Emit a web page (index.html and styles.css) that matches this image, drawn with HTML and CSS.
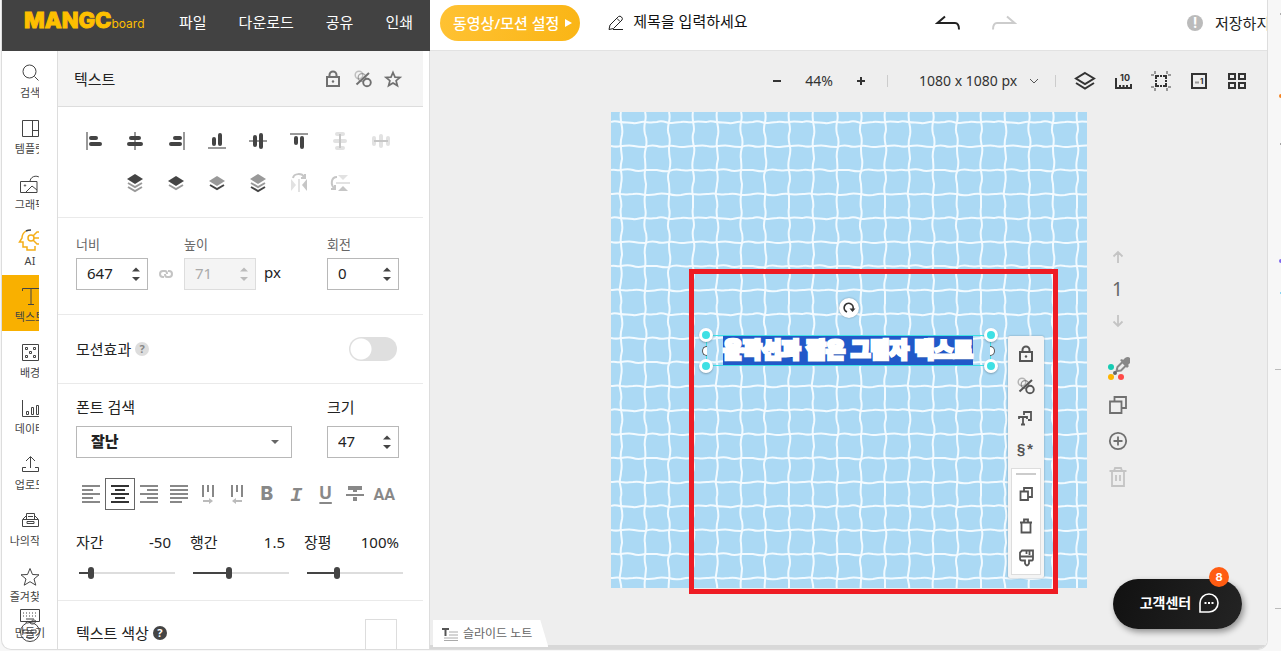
FILE: index.html
```html
<!DOCTYPE html>
<html lang="ko">
<head>
<meta charset="utf-8">
<title>망고보드</title>
<link rel="stylesheet" href="styles.css">
</head>
<body>
<svg class="defs" aria-hidden="true">
  <symbol id="lock" viewBox="0 0 20 20"><path d="M4 8h12v9H4zM6.500 8V6a3.500 3.500 0 0 1 7 0v2" fill="none" stroke="currentColor" stroke-width="2"/><circle cx="10" cy="12.500" r="1.200" fill="currentColor"/></symbol>
  <symbol id="opacity" viewBox="0 0 20 20"><g fill="none" stroke="currentColor"><circle cx="6" cy="6" r="3.800" stroke-width="1.500" opacity=".4"/><circle cx="9" cy="8.500" r="3.800" stroke-width="1.300" opacity=".6"/><circle cx="14" cy="13.500" r="3.800" stroke-width="1.900"/><path d="M3.500 15.500 16 4" stroke-width="2"/></g></symbol>
  <symbol id="copy" viewBox="0 0 20 20"><path d="M4.500 7.500h7.500v8.500H4.500zM8 7V4h8v9h-3.500" fill="none" stroke="currentColor" stroke-width="1.800"/></symbol>
  <symbol id="arrows" viewBox="0 0 10 16"><path d="M1 5.500 5 1.500 9 5.500zM1 11h8l-4 4z" fill="currentColor"/></symbol>
  <symbol id="star" viewBox="0 0 20 20"><path d="M10 1.500l2.500 6 6.500.3-5 4.200 1.800 6.200L10 14.700l-5.800 3.500L6 12 1 7.800l6.500-.3z" fill="none" stroke="currentColor"/></symbol>
  <symbol id="star-bold" viewBox="0 0 20 20"><path d="M10 3.500l2 4.700 5 .3-3.900 3.200 1.300 4.900L10 14l-4.400 2.600 1.300-4.900L3 8.500l5-.3z" fill="none" stroke="currentColor" stroke-width="1.700"/></symbol>
</svg>
<div class="app">
  <div class="left">
    <header class="menu">
      <a class="logo" href="#" aria-label="망고보드"><span class="logo-main">MANGC</span><span class="logo-sub">board</span></a>
      <nav><a href="#">파일</a><a href="#">다운로드</a><a href="#">공유</a><a href="#">인쇄</a></nav>
    </header>
    <div class="work">
      <nav class="rail">
        <div class="rail-clip">
          <a href="#"><svg viewBox="0 0 20 20"><circle cx="9.500" cy="8.500" r="6.500"/><path d="M14.500 13.500l4 4"/></svg>검색</a>
          <a href="#"><svg viewBox="0 0 20 20"><path d="M2.500 1.500h16v16h-16zM12.500 1.500v16M12.500 11.500h6"/></svg>템플릿</a>
          <a href="#"><svg viewBox="0 0 20 20"><path d="M.5 6.500h16.500v11H.5zM6 17l6-6 5 4M10 6c1-6 9-6 11-2"/><circle cx="5" cy="10.500" r=".7"/></svg>그래픽</a>
          <a href="#" class="ai"><svg viewBox="0 0 20 20"><path d="M6 0C3 2 2 5 2 7l-2.500 4H3v5h4v3h8v-4"/><path d="M6 0c2-1 4-1 5-1" stroke="#444"/><circle cx="11" cy="7" r="3"/><path d="M14 7h6M13 5l4-4h3M13 9l4 4h3"/></svg>AI</a>
          <a href="#" class="on"><svg viewBox="0 0 20 20"><path d="M2.500 4V1.500h17V4M11 1.500v16M8 17.500h6"/></svg>텍스트</a>
          <a href="#"><svg viewBox="0 0 20 20"><path d="M2.500 1.500h16v16h-16zM5.500 4.500h2v2h-2zM13.500 4.500h2v2h-2zM9.500 8.500h2v2h-2zM5.500 12.500h2v2h-2zM13.500 12.500h2v2h-2z"/></svg>배경</a>
          <a href="#"><svg viewBox="0 0 20 20"><path d="M2.500 1v16.500H20M6.500 12.500h2v3h-2zM11.500 8.500h2v7h-2zM16.500 6.500h2v9h-2z"/></svg>데이터</a>
          <a href="#"><svg viewBox="0 0 20 20"><path d="M10.500 13V2M6 6l4.500-4.500L15 6M6 12.500H2.500v4h16v-4H15"/></svg>업로드</a>
          <a href="#"><svg viewBox="0 0 20 20"><path d="M2.500 8.500h16v7h-16zM3 8l3-3M18 8l-3-3M6.500 8V2.500h8V8M8 5.500h5M7 10.500h7v2H7z"/></svg>나의작업</a>
          <a href="#"><svg viewBox="0 0 20 20"><use href="#star"/></svg>즐겨찾기</a>
        </div>
        <a class="rail-last" href="#"><svg viewBox="0 0 20 14"><path d="M.5.500h19v12H.5zM3 4h1m2 0h1m2 0h1m2 0h1m2 0h1M3 7h1m2 0h1m2 0h1m2 0h1m2 0h1M6 10h8"/></svg><span>만들기</span>
          <svg class="face" viewBox="0 0 24 24"><circle cx="12" cy="13" r="9.500"/><path d="M8 4c1-3 4-1 4 0 2-4 5-3 6-2-1 3-4 4-6 2M5 11h5v3H5zM13 11h5v3h-5zM8 18c3 2 5 2 8 0"/></svg></a>
      </nav>
      <section class="panel">
        <div class="panel-head"><h1>텍스트</h1>
          <button aria-label="잠금"><svg viewBox="0 0 20 20"><use href="#lock"/></svg></button>
          <button aria-label="투명도"><svg viewBox="0 0 20 20"><use href="#opacity"/></svg></button>
          <button aria-label="즐겨찾기"><svg viewBox="0 0 20 20"><use href="#star-bold"/></svg></button>
        </div>
        <div class="arrange">
          <button aria-label="왼쪽 맞춤"><svg viewBox="0 0 20 20"><path class="g" d="M3 1v18"/><path class="k" d="M7 7h5M7 13h9"/></svg></button>
          <button aria-label="가운데 맞춤"><svg viewBox="0 0 20 20"><path class="g" d="M10 1v18"/><path class="k" d="M6 7h8M4 13h12"/></svg></button>
          <button aria-label="오른쪽 맞춤"><svg viewBox="0 0 20 20"><path class="g" d="M18 1v18"/><path class="k" d="M9 7h5M5 13h9"/></svg></button>
          <button aria-label="아래 맞춤"><svg viewBox="0 0 20 20"><path class="g" d="M1 17h18"/><path class="k" d="M7 8v5M13 4v9"/></svg></button>
          <button aria-label="중간 맞춤"><svg viewBox="0 0 20 20"><path class="g" d="M1 10h18"/><path class="k" d="M7 6v8M13 4v12"/></svg></button>
          <button aria-label="위 맞춤"><svg viewBox="0 0 20 20"><path class="g" d="M1 3h18"/><path class="k" d="M7 7v5M13 7v9"/></svg></button>
          <button aria-label="세로 간격" disabled><svg viewBox="0 0 20 20"><path class="k" d="M7 3h6M5 10h10M7 17h6"/><path class="g" d="M10 3v14"/></svg></button>
          <button aria-label="가로 간격" disabled><svg viewBox="0 0 20 20"><path class="k" d="M3 7v6M10 5v10M17 7v6"/><path class="g" d="M3 10h14"/></svg></button>
          <button class="second" aria-label="맨 앞으로"><svg viewBox="0 0 20 20"><path class="fk" d="M10 1l8 5-8 5-8-5z"/><path class="l" d="M3 10l7 4 7-4M3 14l7 4 7-4"/></svg></button>
          <button aria-label="앞으로"><svg viewBox="0 0 20 20"><path class="fk" d="M10 3l8 5-8 5-8-5z"/><path class="l" d="M3 12l7 4 7-4"/></svg></button>
          <button aria-label="뒤로"><svg viewBox="0 0 20 20"><path class="fg" d="M10 3l8 5-8 5-8-5z"/><path class="l d" d="M3 12l7 4 7-4"/></svg></button>
          <button aria-label="맨 뒤로"><svg viewBox="0 0 20 20"><path class="fg" d="M10 1l8 5-8 5-8-5z"/><path class="l" d="M3 10l7 4 7-4"/><path class="l d" d="M3 14l7 4 7-4"/></svg></button>
          <button aria-label="좌우 반전" disabled><svg viewBox="0 0 20 20"><path class="fk" d="M2 6v12l5-6z"/><path class="fg" d="M18 6v12l-5-6z"/><path class="k thin" d="M10 6v13"/><path class="g thin" d="M4 5c1-5 9-5 11-1l1 1M12 5h4V1"/></svg></button>
          <button aria-label="상하 반전" disabled><svg viewBox="0 0 20 20"><path class="fk" d="M8 2h10l-5 5z"/><path class="fg" d="M8 18h10l-5-5z"/><path class="k thin" d="M6 10h14"/><path class="g thin" d="M7 4C1 4 0 12 5 16M1 16h4v-4"/></svg></button>
        </div>
        <div class="size">
          <div class="field"><label class="small" for="w">너비</label><div class="spin"><input id="w" value="647"><svg><use href="#arrows"/></svg></div></div>
          <svg class="chain" viewBox="0 0 16 10"><path d="M6 8H5a3 3 0 0 1 0-6h2q2 0 2 3M10 2h1a3 3 0 0 1 0 6H9q-2 0-2-3" fill="none" stroke="currentColor" stroke-width="2"/></svg>
          <div class="field"><label class="small" for="h">높이</label><div class="spin off"><input id="h" value="71" disabled><svg><use href="#arrows"/></svg></div></div>
          <span class="px">px</span>
          <div class="field last"><label class="small" for="r">회전</label><div class="spin"><input id="r" value="0"><svg><use href="#arrows"/></svg></div></div>
        </div>
        <div class="motion"><label for="motion">모션효과</label><span class="help">?</span><input id="motion" class="toggle" type="checkbox"></div>
        <div class="type">
          <div class="font-row">
            <div class="field"><label for="font">폰트 검색</label><div class="pick"><select id="font"><option>잘난</option></select><svg viewBox="0 0 10 6"><path d="M1 1h8L5 5z" fill="#666"/></svg></div></div>
            <div class="field last"><label for="fs">크기</label><div class="spin"><input id="fs" value="47"><svg><use href="#arrows"/></svg></div></div>
          </div>
          <div class="format">
            <button aria-label="왼쪽 정렬"><svg viewBox="0 0 20 20"><path d="M1 2h18M1 6h11M1 10h18M1 14h11M1 18h18"/></svg></button>
            <button class="on" aria-label="가운데 정렬"><svg viewBox="0 0 20 20"><path d="M1 2h18M5 6h10M1 10h18M5 14h10M1 18h18"/></svg></button>
            <button aria-label="오른쪽 정렬"><svg viewBox="0 0 20 20"><path d="M1 2h18M8 6h11M1 10h18M8 14h11M1 18h18"/></svg></button>
            <button aria-label="양쪽 정렬"><svg viewBox="0 0 20 20"><path d="M1 2h18M1 6h18M1 10h18M1 14h18M1 18h12"/></svg></button>
            <button aria-label="세로쓰기 오른쪽"><svg viewBox="0 0 20 20"><path d="M5 1v12M10 1v7M15 1v12"/><path class="pale" d="M5 17h7"/><path class="tip" d="M11 14l4 3-4 3z"/></svg></button>
            <button aria-label="세로쓰기 왼쪽"><svg viewBox="0 0 20 20"><path d="M5 1v12M10 1v7M15 1v12"/><path class="pale" d="M15 17H8"/><path class="tip" d="M9 14l-4 3 4 3z"/></svg></button>
            <button class="b">B</button><button class="i">I</button><button class="u">U</button>
            <button aria-label="취소선"><svg viewBox="0 0 20 20"><path class="thick" d="M3 4h14M10 4v4M10 13v4"/><path d="M1 11h18"/></svg></button>
            <button class="aa">AA</button>
          </div>
          <div class="sliders">
            <div><label for="s1">자간</label><output>-50</output><input id="s1" type="range" value="10" style="--fill:12%"></div>
            <div><label for="s2">행간</label><output>1.5</output><input id="s2" type="range" value="37" style="--fill:37%"></div>
            <div><label for="s3">장평</label><output>100%</output><input id="s3" type="range" value="30" style="--fill:31%"></div>
          </div>
        </div>
        <div class="colour"><span>텍스트 색상</span><span class="help dark">?</span><button class="swatch" aria-label="텍스트 색상"></button></div>
      </section>
    </div>
  </div>
  <main class="right">
    <header class="top">
      <button class="motion-btn">동영상/모션 설정 <svg viewBox="0 0 8 8"><path d="M1 0v8l7-4z" fill="#fff"/></svg></button>
      <svg class="pencil" viewBox="0 0 16 16"><path d="M5 14.500h10M1 14.500l1-4.500 8.500-8.500q1.500-1 3 .5t.5 3L5.500 13.500zM9 3.500l3 3" fill="none" stroke="#222"/></svg>
      <span class="doc">제목을 입력하세요</span>
      <button class="undo" aria-label="실행 취소"><svg viewBox="0 0 26 16"><path d="M10 1.500 2.500 8H20q4 0 4 6.500" fill="none" stroke="#222" stroke-width="2"/></svg></button>
      <button class="redo" aria-label="다시 실행"><svg viewBox="0 0 26 16"><path d="M16 1.500 23.500 8H6q-4 0-4 6.500" fill="none" stroke="#ccc" stroke-width="2"/></svg></button>
      <div class="save"><span class="warn">!</span>저장하지 않음</div>
    </header>
    <div class="tools">
      <button class="zoom" aria-label="축소"><svg viewBox="0 0 10 10"><path d="M1 5h8" stroke="#333" stroke-width="2"/></svg></button>
      <span class="percent">44%</span>
      <button class="zoom" aria-label="확대"><svg viewBox="0 0 10 10"><path d="M1 5h8M5 1v8" stroke="#333" stroke-width="2"/></svg></button>
      <i></i>
      <button class="dims"><span>1080 x 1080 px</span><svg viewBox="0 0 10 6"><path d="M1 1l4 4 4-4" fill="none" stroke="#555"/></svg></button>
      <i></i>
      <div class="view">
        <button aria-label="레이어"><svg viewBox="0 0 22 22"><path d="M11 3l9 5.500-9 5.500-9-5.500zM2 13l9 5.500 9-5.500"/></svg></button>
        <button aria-label="눈금자"><svg viewBox="0 0 22 22"><path d="M4 8v10h15v-4M8 18v-3M11.500 18v-3M15 18v-3"/><text x="8" y="11">10</text></svg></button>
        <button aria-label="안내선"><svg viewBox="0 0 22 22"><path d="M6 9V6h3M13 6h3v3M16 13v3h-3M9 16H6v-3M10 6h2M10 16h2M6 10v2M16 10v2"/><path class="mid" d="M5 1v3M1 5h3M17 1v3M18 5h3M5 18v3M1 17h3M17 18v3M18 17h3"/></svg></button>
        <button aria-label="페이지 번호"><svg viewBox="0 0 22 22"><path d="M4 4h14v14H4z"/><text class="num" x="12" y="14">1</text><path class="mid" d="M7 12.500h4"/></svg></button>
        <button aria-label="전체 보기"><svg viewBox="0 0 22 22"><path d="M3 4h6v5H3zM13 4h6v5h-6zM3 13h6v5H3zM13 13h6v5h-6z"/></svg></button>
      </div>
    </div>
    <div class="stage">
      <div class="page">
        <svg class="pool" aria-hidden="true"><defs><pattern id="tiles" width="96" height="96" patternUnits="userSpaceOnUse"><g fill="none" stroke="#f2faff" stroke-width="2">
          <path d="M10 0c-1 3 0 6 0 10c1 4 2 8 1 13c-1 4-2 8-1 12c0 5 1 8 1 12c-1 4-2 8-1 12c1 5 1 9 0 13c0 5-2 8-1 12c1 4 2 8 1 12M34 0c1 3 1 6 0 10c-1 5-1 8 0 12c2 5 2 8 1 13c-1 4-2 8-1 12c0 4 1 8 0 12c-1 5 0 8 1 13c0 4-1 8-1 12c-1 4 0 8 0 12M58 0c1 4 1 6 0 10c-1 4-2 9 0 13c1 4 1 8 0 12c0 5 0 8 1 12c1 5 0 8-1 13c-2 4-1 8 0 12c0 4 1 8 0 12c0 4-1 8 0 12M82 0c-1 4 0 6 0 10c1 5 2 8 0 12c-1 5 0 8 1 13c1 4 0 8-1 12c-1 5-1 8 0 12c1 5 2 9 0 13c-1 4-1 8 0 12c0 4 0 8 0 12"/>
          <path d="M0 10c4-2 6 0 10 0c4 1 8 0 12 1c4 1 8-2 12-1c5 1 8 0 12 0c5-2 8 0 12 1c5 0 8-1 12-1c4-1 8 1 12 0c5-1 10 0 14 0M0 34c4 1 6 1 10 0c4 0 8-1 13 0c4 1 7 1 11 1c5-2 8-2 12-1c5 2 8 0 12 0c4-1 8 1 12 1c5 0 8-1 12-1c5 0 10-1 14 0M0 58c4-1 6 1 10 0c4-1 9-1 12 0c5 2 8 1 12 0c4 0 8 0 12 0c5 1 8 2 12 1c5-2 8-2 12-1c5 1 8 0 12 0c5 0 10 1 14 0M0 82c4 0 6-1 10 0c5 1 8 0 12 0c5-1 8 0 12 1c4 0 8 0 12-1c5-1 8 0 12 0c5 2 8 1 12 1c4-1 8-2 12-1c5 1 10 0 14 0"/></g></pattern></defs><rect width="100%" height="100%" fill="#abd9f4"/><rect width="100%" height="100%" fill="url(#tiles)"/></svg>
        <div class="frame"></div>
        <div class="box"><span class="art">윤곽선과 짧은 그림자 텍스트</span><b class="side ml"></b><b class="side mr"></b><b class="dot tl"></b><b class="dot tr"></b><b class="dot bl"></b><b class="dot br"></b></div>
        <button class="rotate" aria-label="회전"><svg viewBox="0 0 14 14"><path d="M5 11A4.500 4.500 0 1 1 11 8" fill="none" stroke="#333" stroke-width="1.700"/><path d="M7.500 7.500h6L10.500 11z" fill="#333"/></svg></button>
        <div class="float">
          <button aria-label="잠금"><svg viewBox="0 0 20 20"><use href="#lock"/></svg></button>
          <button aria-label="투명도"><svg viewBox="0 0 20 20"><use href="#opacity"/></svg></button>
          <button aria-label="텍스트 변환"><svg viewBox="0 0 20 20"><path d="M3 11V9h8v2M7 9v7M5 16.500h4M8 7V4h7v8h-3" fill="none" stroke="currentColor" stroke-width="1.800"/></svg></button>
          <button class="special">§*</button>
          <div class="sub"><hr>
            <button aria-label="복제"><svg viewBox="0 0 20 20"><use href="#copy"/></svg></button>
            <button aria-label="삭제"><svg viewBox="0 0 20 20"><path d="M4 6.500h12M5.500 6.500v10h9v-10M8 6V3.500h4V6" fill="none" stroke="currentColor" stroke-width="1.800"/></svg></button>
            <button aria-label="서식 복사"><svg viewBox="0 0 20 20"><path d="M6 2.500h11v8q0 2-1 2h-3v3q-2 4-4 0v-3H6q-2 0-2-2V4.500zM4 8.500h13M10.500 3v3M13.500 3v4" fill="none" stroke="currentColor" stroke-width="1.800"/></svg></button>
          </div>
        </div>
      </div>
      <div class="page-tools">
        <button class="light" aria-label="이전"><svg viewBox="0 0 20 20"><path d="M10 16V5M5.500 9.500 10 5l4.500 4.500"/></svg></button>
        <span>1</span>
        <button class="light" aria-label="다음"><svg viewBox="0 0 20 20"><path d="M10 4v11M5.500 10.500 10 15l4.500-4.500"/></svg></button>
        <button class="pipette" aria-label="색상 추출"><svg viewBox="0 0 24 24"><path d="M10.500 15l1-4 5-5 3.500 3.500-5 5z" stroke-width="2"/><path d="M14 4l2-1 1 1 2-2q3-2 5 0t0 5l-2 2 1 1-2 2z" fill="#888" stroke="none"/><circle class="f" cx="9" cy="17" r="2" fill="#666"/><circle class="f" cx="5" cy="11" r="3" fill="#16cbb3"/><circle class="f" cx="5" cy="21" r="3" fill="#ffb400"/><circle class="f" cx="15" cy="21" r="3" fill="#ff4a48"/></svg></button>
        <button aria-label="페이지 복제"><svg viewBox="0 0 20 20"><path d="M2 6.500h11.500V18H2zM6.500 6V2H18v11h-4"/></svg></button>
        <button aria-label="페이지 추가"><svg viewBox="0 0 20 20"><circle cx="10" cy="10" r="8.200"/><path d="M10 5.500v9M5.500 10h9"/></svg></button>
        <button class="light" aria-label="페이지 삭제"><svg viewBox="0 0 20 20"><path d="M1.500 4h17M4 4v15h12V4M6 4l1-3h6l1 3M8 8v6M12 8v6"/></svg></button>
      </div>
    </div>
    <footer><button class="note"><svg viewBox="0 0 18 14"><path d="M1 2h7M4.500 2v7" stroke="#555" stroke-width="2"/><path d="M8 5h9M8 8h9M3 11h14M3 13.500h14" stroke="#aaa"/></svg>슬라이드 노트</button></footer>
    <button class="chat">고객센터<svg viewBox="0 0 22 22"><path d="M2 20V11a9 9 0 1 1 9 9z" fill="none" stroke="#fff" stroke-width="1.600"/><path d="M6.500 11h2M10 11h2M13.500 11h2" stroke="#fff" stroke-width="2"/></svg><span class="badge">8</span></button>
  </main>
</div>
<svg class="edge" aria-hidden="true"><path d="M7 369.500h7M7 608.500h7" stroke="#bbb"/><circle cx="13" cy="14" r="1" fill="#999"/><circle cx="13" cy="96" r="2" fill="#f58220"/><path d="M12 144h2" stroke="#555"/><circle cx="13" cy="261" r="2" fill="#8068ee"/><circle cx="13" cy="293" r="1" fill="#67c8ef"/></svg>
</body>
</html>
```
FILE: styles.css
```css
* { box-sizing: border-box; }
body { margin: 0; height: 100vh; overflow: hidden; display: flex; background: #f7f7f7; color: #222; font: 15px/20px "Noto Sans", "Noto Sans CJK KR", sans-serif; }
button, input, select { font: inherit; color: inherit; margin: 0; }
button { border: 0; padding: 0; background: none; display: flex; align-items: center; justify-content: center; }
a { color: inherit; text-decoration: none; }
svg { display: block; flex: none; }
.defs { position: absolute; width: 0; height: 0; }
.app { flex: 1; min-width: 0; height: calc(100vh - 1px); margin-left: 1px; border: 1px solid #ddd; border-top: 0; border-radius: 0 0 10px 10px; overflow: hidden; display: grid; grid-template-columns: 428px minmax(0, 1fr); background: #fff; }
.edge { width: 13px; height: 100%; }

/* left side */
.left { display: flex; flex-direction: column; min-height: 0; border-right: 1px solid #ddd; }
.menu { flex: none; height: 51px; margin-right: -1px; background: #424242; color: #fff; display: flex; align-items: center; padding: 0 17px 8px 22px; }
.logo { display: flex; align-items: baseline; color: #fdbf00; }
.logo-main { font: 800 22px/26px Inter, sans-serif; -webkit-text-stroke: 1px #fdbf00; }
.logo-sub { font: 400 12px/26px Inter, sans-serif; }
.menu nav { display: flex; gap: 32px; margin-left: auto; white-space: nowrap; }
.work { flex: 1; min-height: 0; display: flex; }
.rail { position: relative; flex: none; width: 56px; border-right: 1px solid #ddd; font-size: 11px; color: #444; }
.rail-clip { width: 37px; overflow: hidden; }
.rail-clip a { width: 56px; height: 56px; padding-top: 12px; display: flex; flex-direction: column; align-items: center; white-space: nowrap; }
.rail svg { width: 20px; height: 20px; fill: none; stroke: #444; overflow: visible; }
.rail .on { background: #f9b000; }
.rail .ai svg { stroke: #f5ae19; stroke-width: 1.5; }
.rail-last { position: absolute; left: 0; bottom: 6px; width: 56px; display: flex; flex-direction: column; align-items: center; }
.rail-last svg { height: 14px; }
.rail-last .face { position: absolute; bottom: 0; left: 16px; width: 24px; height: 24px; }
.panel { flex: none; width: 365px; min-height: 0; overflow: hidden; }
.panel-head { height: 56px; padding: 0 15px 0 16px; display: flex; align-items: center; background: #f4f4f4; border-bottom: 1px solid #ddd; }
h1 { margin: 0 auto 0 0; font-size: 15px; font-weight: 400; }
.panel-head button { width: 30px; height: 30px; color: #707070; }
.panel-head svg { width: 20px; height: 20px; }
.arrange, .size, .motion, .type { border-bottom: 1px solid #eaeaea; }
.arrange { padding: 13px 22px 13px 15px; display: grid; grid-template-columns: repeat(8, 1fr); grid-auto-rows: 42px; }
.arrange svg { width: 20px; height: 20px; fill: none; }
.arrange .second { grid-column: 2; }
.g { stroke: #999; stroke-width: 2; }
.k { stroke: #444; stroke-width: 4; stroke-linecap: round; }
.fk { fill: #444; }
.fg { fill: #999; }
.l { stroke: #999; stroke-width: 2; }
.l.d { stroke: #444; }
:disabled .g { stroke: #c6c6c6; }
:disabled .k { stroke: #e2e2e2; }
.arrange .thin { stroke-width: 2; stroke-linecap: butt; }
:disabled .fk { fill: #e2e2e2; }
:disabled .fg { fill: #c6c6c6; }
.size { display: flex; align-items: flex-end; padding: 16px 24px 24px 18px; }
.field label { display: block; height: 30px; line-height: 22px; }
.field label.small { height: 24px; line-height: 20px; font-size: 13px; color: #666; }
.spin { position: relative; width: 72px; height: 32px; }
.spin input { width: 100%; height: 100%; border: 1px solid #b8b8b8; border-radius: 0; padding: 0 26px 3px 10px; background: #fff; }
.spin svg { position: absolute; right: 7px; top: 8px; width: 10px; height: 16px; color: #444; }
.spin.off input { background: #f4f4f4; border-color: #ddd; color: #aaa; }
.spin.off svg { color: #bbb; }
.chain { width: 16px; height: 10px; margin: 0 10px 11px; color: #c4c4c4; }
.px { margin: 0 0 8px 8px; }
.last { margin-left: auto; }
.motion { height: 69px; padding: 0 26px 0 18px; display: flex; align-items: center; gap: 4px; }
.help { width: 14px; height: 14px; border-radius: 50%; background: #ddd; color: #888; font: 700 11px/14px "Noto Sans", sans-serif; text-align: center; }
.help.dark { background: #444; color: #fff; }
.toggle { appearance: none; margin-left: auto; width: 48px; height: 24px; border-radius: 12px; background: radial-gradient(circle at 12px 12px, #fff 10px, #dfdfdf 11px); }
.type { padding: 12px 24px 17px 18px; }
.font-row { display: flex; }
.pick { position: relative; width: 216px; height: 32px; }
.pick select { appearance: none; width: 100%; height: 100%; border: 1px solid #b8b8b8; border-radius: 0; padding: 0 14px 2px; background: #fff; font-weight: 900; }
.pick svg { position: absolute; right: 12px; top: 13px; width: 10px; height: 6px; }
.format { margin-top: 20px; display: grid; grid-template-columns: repeat(11, 1fr); color: #888; }
.format button { height: 32px; }
.format svg { width: 20px; height: 20px; fill: none; stroke: #888; stroke-width: 2; }
.format .on { border: 1px solid #666; }
.format .on svg { stroke: #333; }
.format .pale { stroke: #bbb; }
.format .tip { fill: #bbb; stroke: none; }
.format .thick { stroke-width: 4; }
.format .b { font: 800 19px/20px Inter, sans-serif; }
.format .i { font: italic 700 20px/20px "Liberation Mono", monospace; padding-top: 4px; }
.format .u { font: 700 17px/20px Inter, sans-serif; padding-bottom: 3px; text-decoration: underline; text-decoration-thickness: 2px; text-underline-offset: 3px; }
.format .aa { font: 700 16px/20px Roboto, sans-serif; padding-top: 2px; }
.sliders { margin-top: 20px; display: grid; grid-template-columns: repeat(3, 95px); justify-content: space-between; }
.sliders div { display: grid; grid-template-columns: 1fr auto; line-height: 24px; }
.sliders input { grid-column: 1 / 3; appearance: none; width: 96px; height: 12px; margin: 13px -4px 4px 3px; background: linear-gradient(90deg, #444 var(--fill), #ddd var(--fill)) center / 100% 2px no-repeat; }
.sliders input::-webkit-slider-thumb { appearance: none; width: 6px; height: 12px; border-radius: 3px; background: #444; }
.colour { display: flex; align-items: center; gap: 4px; padding: 18px 26px 0 18px; }
.colour span { margin-bottom: 4px; }
.swatch { margin-left: auto; width: 32px; height: 32px; border: 1px solid #ddd; background: #fff; }

/* right side */
.right { position: relative; display: flex; flex-direction: column; min-width: 0; min-height: 0; background: #eee; }
.top { flex: none; height: 51px; background: #fff; border-bottom: 1px solid #e2e2e2; display: flex; align-items: center; padding: 0 0 5px 10px; white-space: nowrap; }
.motion-btn { height: 36px; padding: 0 8px 0 13px; border-radius: 18px; background: linear-gradient(100deg, #ffc233, #fab515); color: #fff; font-weight: 500; gap: 5px; }
.motion-btn svg { width: 8px; height: 8px; }
.pencil { width: 16px; height: 16px; margin: 0 9px 0 28px; }
.doc { color: #111; padding-bottom: 3px; }
.undo { margin-left: auto; }
.undo svg, .redo svg { width: 26px; height: 16px; }
.redo { margin: 0 170px 0 30px; }
.save { width: 80px; overflow: hidden; display: flex; align-items: center; }
.warn { flex: none; width: 16px; height: 16px; margin-right: 12px; border-radius: 50%; background: #bbb; color: #fff; font: 700 14px/16px Inter, sans-serif; text-align: center; }
.tools { flex: none; height: 61px; display: flex; align-items: center; justify-content: flex-end; padding: 0 11px 2px 0; font-size: 14px; color: #333; white-space: nowrap; }
.tools i { width: 1px; height: 12px; background: #ccc; }
.zoom { width: 30px; height: 30px; }
.zoom svg { width: 10px; height: 10px; }
.percent { width: 54px; text-align: center; }
.zoom + i { margin: 0 31px 0 11px; }
.dims { gap: 9px; margin-right: 16px; }
.dims span { width: 101px; text-align: left; }
.dims svg { width: 10px; height: 6px; }
.view { display: flex; margin-left: 10px; }
.view button { width: 38px; height: 30px; }
.view svg { width: 22px; height: 22px; fill: none; stroke: #333; stroke-width: 2; }
.view text { font: 700 9px Inter, sans-serif; fill: #333; stroke: none; }
.view .num { font-size: 8px; }
.view .mid { stroke: #999; }
.stage { flex: 1; min-height: 0; display: grid; grid-template-columns: 1fr 476px 1fr; align-items: start; }
.page { grid-column: 2; position: relative; height: 476px; }
.pool { width: 100%; height: 100%; }
.frame { position: absolute; left: 78px; top: 157px; width: 369px; height: 325px; border: 5px solid #ee1c24; }
.box { position: absolute; left: 95px; top: 223px; width: 285px; height: 31px; border: 1px solid #3fe0e4; display: flex; justify-content: center; align-items: center; }
.art { height: 29px; width: 250px; background: #2159c9; color: #fff; font: 900 21px/25px "Noto Sans CJK KR", sans-serif; white-space: nowrap; text-align: center; -webkit-text-stroke: 3px #fff; text-shadow: 1px 2px 0 #1646a8; }
.dot { position: absolute; width: 14px; height: 14px; border-radius: 50%; border: 3px solid #fff; background: #3fe0e4; box-shadow: 0 1px 2px #0004; }
.tl { left: -8px; top: -8px; } .tr { right: -8px; top: -8px; } .bl { left: -8px; bottom: -8px; } .br { right: -8px; bottom: -8px; }
.side { position: absolute; top: 10px; width: 5px; height: 10px; background: #fff; border: 1px solid #555; }
.ml { left: -5px; border-right: 0; border-radius: 5px 0 0 5px; }
.mr { right: -5px; border-left: 0; border-radius: 0 5px 5px 0; }
.rotate { position: absolute; left: 228px; top: 186px; width: 20px; height: 20px; border-radius: 50%; background: #fff; box-shadow: 0 0 2px #0005; }
.rotate svg { width: 14px; height: 14px; }
.float { position: absolute; left: 397px; top: 224px; width: 36px; padding: 2px 3px 3px; background: #f4f4f4; border-radius: 2px; box-shadow: 0 0 2px #0005; color: #555; }
.float button { width: 30px; height: 32px; }
.float svg { width: 20px; height: 20px; }
.float .special { font: 700 15px/20px "Liberation Mono", monospace; padding-top: 4px; }
.sub { margin-top: 2px; background: #fff; border: 1px solid #ddd; }
.sub hr { border: 0; height: 2px; margin: 4px 4px 3px; background: #ccc; }
.float .sub button { width: 28px; }
.page-tools { margin: 129px 0 0 11px; width: 40px; display: flex; flex-direction: column; align-items: center; color: #666; }
.page-tools button { width: 40px; height: 32px; margin-bottom: 4px; }
.page-tools svg { width: 20px; height: 20px; fill: none; stroke: #707070; stroke-width: 1.8; }
.page-tools .light svg { stroke: #c4c4c4; }
.page-tools span { font-size: 19px; line-height: 24px; margin-bottom: 4px; }
.page-tools .pipette { margin: 11px 0 5px; }
.page-tools .pipette svg { width: 24px; height: 24px; stroke: #888; }
.page-tools .f { stroke: none; }
footer { flex: none; height: 29px; padding-left: 3px; background: linear-gradient(#d8d8d8, #d8d8d8) bottom / 100% 4px no-repeat; }
.note { height: 27px; padding: 0 16px 0 8px; gap: 4px; background: #fff; clip-path: polygon(0 0, 93% 0, 100% 100%, 0 100%); font-size: 12px; color: #666; }
.note svg { width: 18px; height: 14px; fill: none; }
.chat { position: absolute; right: 25px; bottom: 20px; width: 129px; height: 50px; padding: 0 0 2px 5px; border-radius: 25px; gap: 7px; background: linear-gradient(110deg, #111, #242424); box-shadow: 2px 3px 6px #0006; color: #fff; font-size: 14px; font-weight: 700; }
.chat svg { width: 22px; height: 22px; }
.badge { position: absolute; right: 13px; top: -12px; width: 20px; height: 20px; border-radius: 50%; background: #ff5c12; font: 700 11px/20px Inter, sans-serif; text-align: center; }
```
